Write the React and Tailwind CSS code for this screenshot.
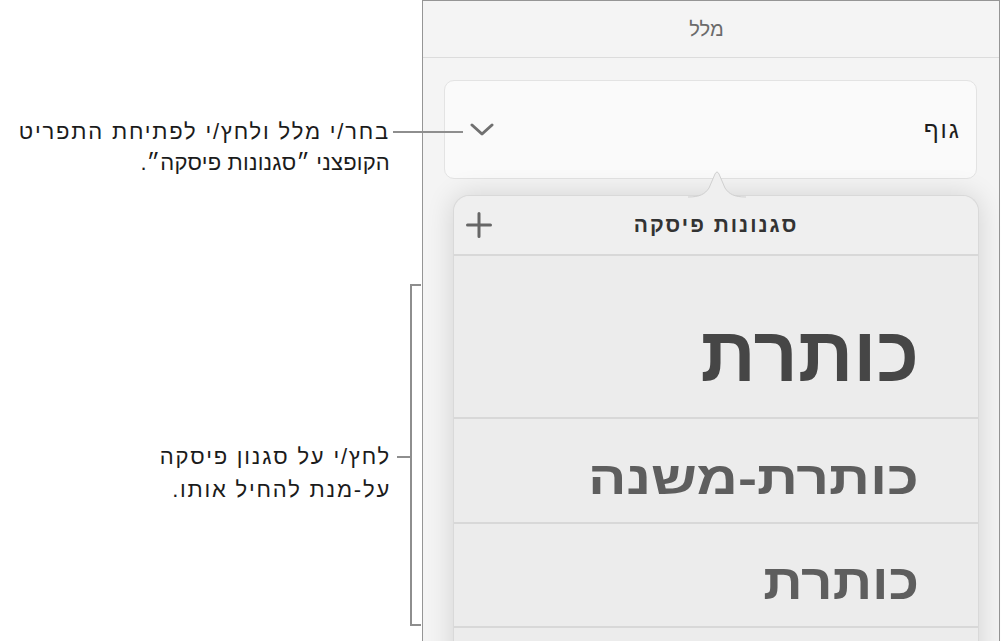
import React from 'react'

const font = { fontFamily: '"Liberation Sans", "DejaVu Sans", sans-serif' }

const Chevron = () => (
  <svg width="24" height="14" viewBox="0 0 24 14" fill="none">
    <path d="M2 2 L12 11 L22 2" stroke="#707070" strokeWidth="3" strokeLinecap="round" strokeLinejoin="round" />
  </svg>
)

const Plus = () => (
  <svg width="26" height="26" viewBox="0 0 26 26" fill="none">
    <path d="M13 1.5 V24.5 M1.5 13 H24.5" stroke="#666" strokeWidth="3" strokeLinecap="round" />
  </svg>
)

const StyleRow = ({ label, size, color, height, pt, stretch }) => (
  <div className={`flex items-start border-b-2 border-[#d8d8d8] pr-[59px] ${height} ${pt}`}>
    <span className={`inline-block origin-right font-bold leading-none ${size} ${color} ${stretch}`}>{label}</span>
  </div>
)

const App = () => {
  return (
    <div className="relative flex w-[1001px] h-[641px] overflow-hidden bg-white" style={font}>
      {/* callouts */}
      <div className="w-[422px] shrink-0 flex flex-col items-end">
        <div className="relative mt-[116px] pr-[32px] text-right text-[22px] leading-[31px] text-[#1b1b1b]" dir="rtl">
          <p className="tracking-[1.8px]">בחר/י מלל ולחץ/י לפתיחת התפריט</p>
          <p className="tracking-[0.2px]">הקופצני ״סגנונות פיסקה״.</p>
          <div className="absolute top-[15px] left-[calc(100%-29px)] w-[70px] h-[2px] bg-[#8e8e8e]" />
        </div>

        <div className="mt-[106px] mr-[1px] flex items-start">
          <div className="mt-[156px] text-right text-[22px] leading-[33px] tracking-[1.8px] text-[#1b1b1b]" dir="rtl">
            <p>לחץ/י על סגנון פיסקה</p>
            <p>על-מנת להחיל אותו.</p>
          </div>
          <div className="mt-[172px] ml-[6px] w-[13px] h-[2px] bg-[#8e8e8e]" />
          <div className="w-[11px] h-[342px] border-2 border-r-0 border-[#8e8e8e]" />
        </div>
      </div>

      {/* inspector panel */}
      <div className="w-[578px] h-[660px] shrink-0 border-l border-t border-r border-[#959595] bg-[#f4f4f4]">
        <div className="h-[57px] border-b border-[#dcdcdc] flex items-center justify-center pr-[9px] text-[20px] text-[#6b6b6b]">
          מלל
        </div>

        <div className="ml-[21px] mr-[22px] mt-[22px] h-[99px] rounded-[10px] border border-[#e3e3e3] bg-[#fafafa] flex items-center justify-between pl-[25px] pr-[15px]">
          <Chevron />
          <span className="text-[24px] tracking-[2px] text-[#1e1e1e]" dir="rtl">גוף</span>
        </div>

        <div className="relative ml-[30px] mt-[16px] w-[526px] rounded-t-[16px] border border-b-0 border-[#d9d9d9] bg-[#ececec] shadow-[0_0_28px_rgba(0,0,0,0.14)]">
          <svg className="absolute -top-[26px] left-[234px]" width="58" height="28" viewBox="0 0 58 28">
            <path d="M0 27 C12 27 17 24 21 18 L27 4 Q29 0 31 4 L37 18 C41 24 46 27 58 27 Z" fill="#efefef" />
            <path d="M0 27 C12 27 17 24 21 18 L27 4 Q29 0 31 4 L37 18 C41 24 46 27 58 27" fill="none" stroke="#d0d0d0" strokeWidth="1" />
          </svg>

          <div className="h-[60px] rounded-t-[16px] bg-[#efefef] border-b-2 border-[#d8d8d8] flex items-center justify-between px-[12px]">
            <Plus />
            <span className="font-bold text-[21px] tracking-[2px] text-[#333]" dir="rtl">סגנונות פיסקה</span>
            <div className="w-[26px]" />
          </div>

          <div dir="rtl">
            <StyleRow label="כותרת" size="text-[77px]" color="text-[#464646]" height="h-[163px]" pt="pt-[60px]" stretch="" />
            <StyleRow label="כותרת-משנה" size="text-[46px]" color="text-[#5e5e5e]" height="h-[105px]" pt="pt-[36px]" stretch="scale-x-[1.24]" />
            <StyleRow label="כותרת" size="text-[49px]" color="text-[#5e5e5e]" height="h-[104px]" pt="pt-[34px]" stretch="scale-x-[1.12]" />
            <div className="h-[60px]" />
          </div>
        </div>
      </div>
    </div>
  )
}

export default App
